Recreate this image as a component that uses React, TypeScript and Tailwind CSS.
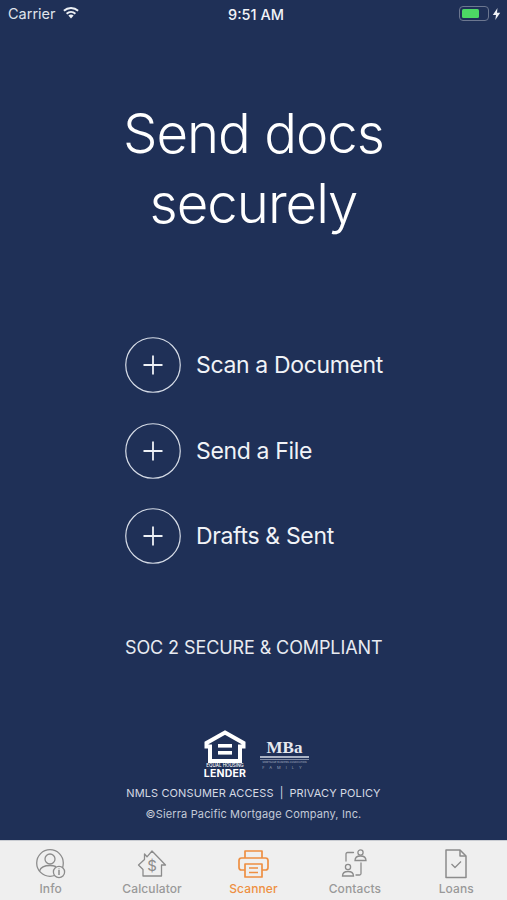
const actions = ["Scan a Document", "Send a File", "Drafts & Sent"];

function PlusCircle() {
  return (
    <svg width="56" height="56" viewBox="0 0 56 56" fill="none" className="shrink-0">
      <circle cx="28" cy="28" r="27.25" stroke="#d5dbe6" strokeWidth="1.2" />
      <path d="M28 18.5v19M18.5 28h19" stroke="#eef1f6" strokeWidth="1.8" />
    </svg>
  );
}

function StatusBar() {
  return (
    <div className="relative flex h-[27px] items-center justify-between pl-[8px] pr-[6px] text-[14.5px] text-[#dfe3eb]">
      <div className="flex items-center gap-[6px]">
        <span>Carrier</span>
        <svg width="18" height="13" viewBox="0 0 18 13" className="-mt-[2px]">
          <path d="M9 12.6 L6.4 9.6 A4 4 0 0 1 11.6 9.6 Z" fill="#eef1f6" />
          <path d="M4.6 7.7 A6.6 6.6 0 0 1 13.4 7.7" stroke="#eef1f6" strokeWidth="1.9" fill="none" />
          <path d="M1.9 4.8 A10.4 10.4 0 0 1 16.1 4.8" stroke="#eef1f6" strokeWidth="1.9" fill="none" />
        </svg>
      </div>
      <span className="absolute left-[228px] top-[4px] font-medium text-[#f1f3f7]">9:51 AM</span>
      <div className="flex items-center gap-[3px]">
        <div className="flex h-[15px] w-[30px] items-center rounded-[4px] border border-[#6c7790] p-[2px]">
          <div className="h-full w-[17px] rounded-[1.5px] bg-[#4cd964]" />
        </div>
        <svg width="9" height="12" viewBox="0 0 9 12">
          <path d="M5.5 0 L0.8 7 H4 L3.3 12 L8.2 4.8 H5 Z" fill="#eef1f6" />
        </svg>
      </div>
    </div>
  );
}

function HousingLogo() {
  return (
    <div className="flex w-[44px] flex-col items-center text-white">
      <svg width="42" height="33" viewBox="0 0 42 33" fill="none">
        <path d="M21 2.5 L39.5 13 V16.5 H36 V31 H6 V16.5 H2.5 V13 Z" stroke="#fff" strokeWidth="4" strokeLinejoin="miter" />
        <rect x="14" y="14" width="14" height="3.6" fill="#fff" />
        <rect x="14" y="21" width="14" height="3.6" fill="#fff" />
      </svg>
      <span className="text-[4.5px] leading-[5px] font-medium whitespace-nowrap">EQUAL HOUSING</span>
      <span className="text-[10.5px] leading-[12px] font-bold tracking-[0.2px]">LENDER</span>
    </div>
  );
}

function MbaLogo() {
  return (
    <div className="flex w-[49px] flex-col items-center text-[#e6e9ef]">
      <span className="font-['Liberation_Serif',serif] text-[17px] leading-[15px] font-bold">MBa</span>
      <div className="mt-[1px] h-[1.5px] w-full bg-[#aab3c4]" />
      <div className="mt-[1px] h-[1px] w-full bg-[#7f8aa3]" />
      <span className="mt-[1px] text-[2.5px] leading-[4px] whitespace-nowrap text-[#aab3c4]">MORTGAGE BANKERS ASSOCIATION</span>
      <span className="text-[4px] leading-[6px] tracking-[5px] text-[#98a2b6]">FAMILY</span>
    </div>
  );
}

const stroke = "#8c8c8c";

function InfoIcon() {
  return (
    <svg width="30" height="30" viewBox="0 0 30 30" fill="none" stroke={stroke} strokeWidth="1.3">
      <circle cx="14" cy="14" r="13.3" />
      <circle cx="14" cy="10" r="5" />
      <path d="M3.5 22 C5 17.5 10 16.5 14 16.5 C16 16.5 18 16.8 20 17.6" />
      <circle cx="23" cy="23" r="5.6" fill="#efefef" />
      <path d="M23 21v5M23 19.5v.8" strokeWidth="1.5" />
    </svg>
  );
}

function CalculatorIcon() {
  return (
    <svg width="30" height="30" viewBox="0 0 30 30" fill="none" stroke={stroke} strokeWidth="1.3" strokeLinejoin="round">
      <path d="M1.5 16 L7.5 10.5 V5 L10 7.8 L15 2 L28.5 16 H24.5 V27 H6 V20.5 Z" />
      <text x="15" y="22" textAnchor="middle" fontSize="15" fontFamily="Inter, sans-serif" fill={stroke} stroke="none">$</text>
    </svg>
  );
}

function ScannerIcon() {
  return (
    <svg width="31" height="30" viewBox="0 0 31 30" fill="none" stroke="#ee8f42" strokeWidth="1.7" strokeLinejoin="round">
      <path d="M7 9 V2 H24 V9" />
      <path d="M7 21 H3.5 Q1 21 1 18.5 V11.5 Q1 9 3.5 9 H27.5 Q30 9 30 11.5 V18.5 Q30 21 27.5 21 H24" />
      <path d="M7 15 H24 V28 H7 Z" />
      <path d="M11 19 H20 M11 23.5 H20" />
    </svg>
  );
}

function ContactsIcon() {
  return (
    <svg width="30" height="30" viewBox="0 0 30 30" fill="none" stroke={stroke} strokeWidth="1.3" strokeLinecap="round">
      <circle cx="20.5" cy="3.5" r="2.6" />
      <path d="M15 11.5 C15 8 17.5 7 20.5 7 C23.5 7 26 8 26 11.5 Z" />
      <circle cx="8" cy="18" r="2.6" />
      <path d="M2.5 27 C2.5 23.5 5 22.5 8 22.5 C11 22.5 13.5 23.5 13.5 27 Z" />
      <path d="M13.5 3.5 H7.5 Q6 3.5 6 5 V12" />
      <path d="M21 14 V24.5 Q21 26 19.5 26 H16" />
    </svg>
  );
}

function LoansIcon() {
  return (
    <svg width="24" height="30" viewBox="0 0 24 30" fill="none" stroke={stroke} strokeWidth="1.5" strokeLinejoin="round">
      <path d="M2 1 H16 L22 7 V28.5 H2 Z" />
      <path d="M16 1 V7 H22" />
      <path d="M7.5 15 L11 18.5 L17 12.5" strokeWidth="1.3" />
    </svg>
  );
}

const tabs = [
  { label: "Info", icon: <InfoIcon /> },
  { label: "Calculator", icon: <CalculatorIcon /> },
  { label: "Scanner", icon: <ScannerIcon />, active: true },
  { label: "Contacts", icon: <ContactsIcon /> },
  { label: "Loans", icon: <LoansIcon /> },
];

export default function App() {
  return (
    <div className="flex h-[900px] w-[507px] flex-col overflow-hidden bg-[#1f3057] font-['Inter',sans-serif]">
      <StatusBar />

      <h1 className="mt-[71px] text-center text-[54.5px] leading-[70px] font-light tracking-[-1px] text-white">
        Send docs
        <br />
        securely
      </h1>

      <div className="mt-[99px] flex flex-col gap-[29.5px] pl-[125px]">
        {actions.map((a) => (
          <div key={a} className="flex items-center gap-[15px]">
            <PlusCircle />
            <span className="text-[23px] leading-[30px] font-normal tracking-[-0.35px] text-[#f1f3f7]">{a}</span>
          </div>
        ))}
      </div>

      <p className="mt-[72px] pl-[125px] text-[18px] leading-[24px] tracking-[-0.1px] text-[#e8ebf1]">SOC 2 SECURE &amp; COMPLIANT</p>

      <div className="mt-[70px] flex justify-center gap-[13px] pl-[5px]">
        <HousingLogo />
        <div className="pt-[10px]">
          <MbaLogo />
        </div>
      </div>

      <div className="mt-[5px] flex items-center justify-center gap-[6px] text-[11px] leading-[16px] tracking-[0.1px] text-[#d5dae4]">
        <span>NMLS CONSUMER ACCESS</span>
        <span>|</span>
        <span>PRIVACY POLICY</span>
      </div>
      <p className="mt-[5px] text-center text-[11px] leading-[16px] tracking-[0.15px] text-[#c3cad7]">
        ©Sierra Pacific Mortgage Company, Inc.
      </p>

      <nav className="mt-auto grid h-[60px] grid-cols-5 border-t border-[#c9ccd2] bg-[#efefef]">
        {tabs.map((t) => (
          <div key={t.label} className="flex flex-col items-center pt-[8px]">
            <div className="flex h-[30px] items-center">{t.icon}</div>
            <span className={`mt-[2px] text-[12px] leading-[15px] font-medium tracking-[0.1px] ${t.active ? "text-[#ee8f42]" : "text-[#999999]"}`}>
              {t.label}
            </span>
          </div>
        ))}
      </nav>
    </div>
  );
}
